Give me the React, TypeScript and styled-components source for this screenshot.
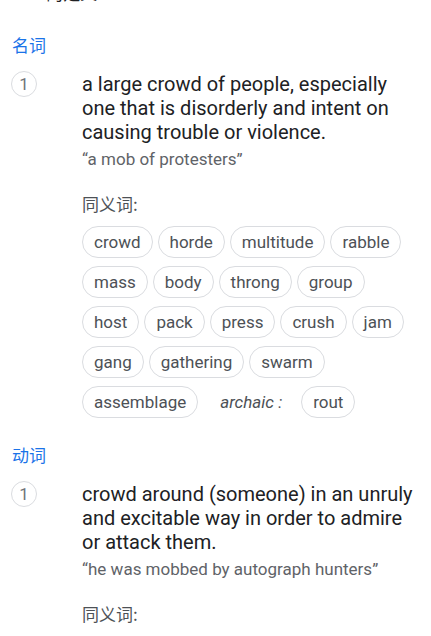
import React from "react";
import styled, { createGlobalStyle } from "styled-components";

const Global = createGlobalStyle`
  html, body { margin: 0; padding: 0; background: #fff; }
  body { font-family: Roboto, "Noto Sans CJK SC", Arial, sans-serif; overflow: hidden; }
`;

const Page = styled.div`
  padding: 0 12px;
  width: 431px;
  box-sizing: border-box;
`;

const Title = styled.div`
  font-size: 17px;
  line-height: 24px;
  color: #202124;
  margin-top: -18px;
`;

const Section = styled.section`
  display: flex;
  flex-direction: column;
`;

const PosLabel = styled.div<{ $first?: boolean }>`
  font-family: "Noto Sans CJK SC", Roboto, sans-serif;
  font-size: 17px;
  line-height: 24px;
  color: #1a73e8;
  margin-top: ${(p) => (p.$first ? "27px" : "25px")};
`;

const Sense = styled.div`
  display: grid;
  grid-template-columns: 70px 1fr;
  margin-top: 15px;
`;

const Num = styled.div`
  width: 24px;
  height: 24px;
  border: 1px solid #dadce0;
  border-radius: 50%;
  display: flex;
  align-items: center;
  justify-content: center;
  font-size: 17px;
  color: #70757a;
  margin-left: -1px;
  margin-top: -1px;
`;

const Body = styled.div`
  display: flex;
  flex-direction: column;
`;

const Definition = styled.div`
  font-size: 20px;
  line-height: 24px;
  color: #202124;
`;

const Example = styled.div`
  font-size: 17px;
  line-height: 22px;
  color: #5f6368;
  margin-top: 4px;
`;

const SynLabel = styled.div`
  font-family: "Noto Sans CJK SC", Roboto, sans-serif;
  font-size: 17px;
  line-height: 24px;
  color: #4d5156;
  margin-top: 22px;
`;

const Chips = styled.div`
  display: flex;
  flex-wrap: wrap;
  align-items: center;
  column-gap: 5px;
  row-gap: 8px;
  margin-top: 10px;
`;

const Chip = styled.span`
  box-sizing: border-box;
  height: 32px;
  padding: 0 11px;
  border: 1px solid #dadce0;
  border-radius: 16px;
  display: inline-flex;
  align-items: center;
  font-size: 17px;
  color: #4d5156;
`;

const Qualifier = styled.span`
  font-style: italic;
  font-size: 17px;
  color: #4d5156;
  margin: 0 14px 0 17px;
`;

type Syn = string | { q: string };

const senses: {
  pos: string;
  def: string;
  ex: string;
  syn: Syn[];
}[] = [
  {
    pos: "名词",
    def: "a large crowd of people, especially one that is disorderly and intent on causing trouble or violence.",
    ex: "“a mob of protesters”",
    syn: [
      "crowd", "horde", "multitude", "rabble", "mass", "body", "throng", "group",
      "host", "pack", "press", "crush", "jam", "gang", "gathering", "swarm",
      "assemblage", { q: "archaic :" }, "rout",
    ],
  },
  {
    pos: "动词",
    def: "crowd around (someone) in an unruly and excitable way in order to admire or attack them.",
    ex: "“he was mobbed by autograph hunters”",
    syn: [],
  },
];

export default function App() {
  return (
    <Page>
      <Global />
      <Title>mob的定义</Title>
      {senses.map((s, i) => (
        <Section key={s.pos}>
          <PosLabel $first={i === 0}>{s.pos}</PosLabel>
          <Sense>
            <Num>1</Num>
            <Body>
              <Definition>{s.def}</Definition>
              <Example>{s.ex}</Example>
              <SynLabel>同义词:</SynLabel>
              {s.syn.length > 0 && (
                <Chips>
                  {s.syn.map((w, j) =>
                    typeof w === "string" ? (
                      <Chip key={j}>{w}</Chip>
                    ) : (
                      <Qualifier key={j}>{w.q}</Qualifier>
                    )
                  )}
                </Chips>
              )}
            </Body>
          </Sense>
        </Section>
      ))}
    </Page>
  );
}
